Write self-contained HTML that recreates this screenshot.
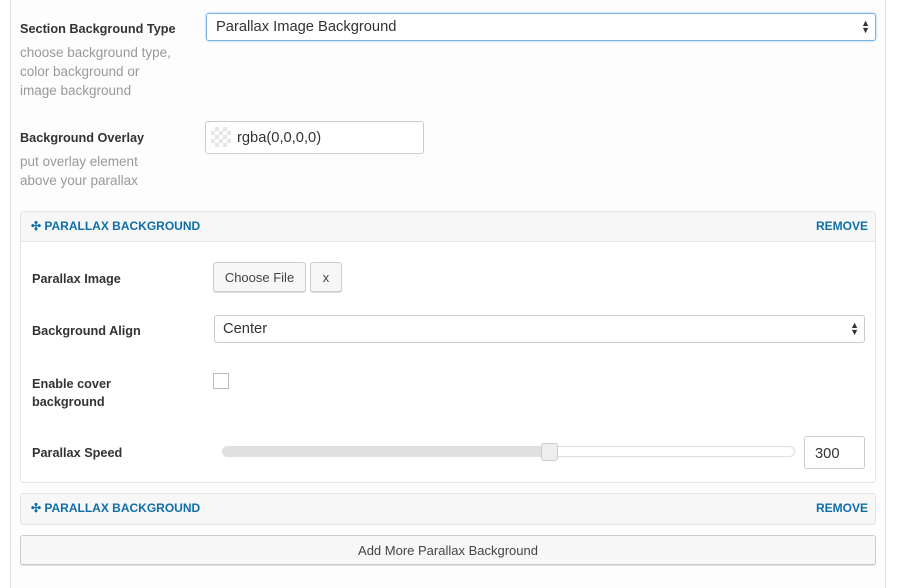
<!DOCTYPE html>
<html><head><style>
*{box-sizing:border-box;margin:0;padding:0}
body{width:900px;height:579px;background:#fff;font-family:"Liberation Sans",sans-serif;position:relative;overflow:hidden;color:#333}
.a{position:absolute}
.outer{left:10px;top:-2px;width:876px;height:590px;border-left:1px solid #e5e5e5;border-right:1px solid #e5e5e5;background:#fdfdfd}
.lbl{font-size:12.7px;font-weight:bold;color:#333}
.desc{font-size:13.5px;color:#999;line-height:19px}
.inp{border:1px solid #ccc;border-radius:3px;background:#fff;font-size:14.7px;color:#333}
.blue{color:#0e6fa8;font-size:12px;font-weight:bold}
.btn{border:1px solid #ccc;border-radius:3px;background:#f7f7f7;font-size:13px;color:#444;text-align:center;box-shadow:0 1px 0 #ddd}
.arr{position:absolute;right:5px;font-size:9px;line-height:7px;color:#333}
</style></head><body>
<div class="a outer"></div>
<div class="a lbl" style="left:20px;top:22px">Section Background Type</div>
<div class="a desc" style="left:20px;top:43px">choose background type,<br>color background or<br>image background</div>
<div class="a inp" style="left:206px;top:13px;width:670px;height:28px;border-color:#7cb2e3;box-shadow:0 0 2px #9cc6ee;padding:5px 9px">Parallax Image Background<div class="arr" style="top:6px">▲<br>▼</div></div>
<div class="a lbl" style="left:20px;top:131px">Background Overlay</div>
<div class="a desc" style="left:20px;top:152px">put overlay element<br>above your parallax</div>
<div class="a inp" style="left:205px;top:121px;width:219px;height:33px;padding:8px 0 0 31px">rgba(0,0,0,0)
<div class="a" style="left:5px;top:5px;width:20px;height:20px;background:repeating-conic-gradient(#e6e6e6 0 25%,#fff 0 50%) 0 0/8px 8px"></div></div>

<div class="a" style="left:20px;top:211px;width:856px;height:272px;border:1px solid #e5e5e5;border-radius:3px;background:#fff"></div>
<div class="a" style="left:21px;top:212px;width:854px;height:30px;background:#f7f7f7;border-bottom:1px solid #e5e5e5"></div>
<div class="a blue" style="left:31px;top:219px">✣ PARALLAX BACKGROUND</div>
<div class="a blue" style="left:816px;top:219px">REMOVE</div>

<div class="a lbl" style="left:32px;top:272px">Parallax Image</div>
<div class="a btn" style="left:213px;top:262px;width:93px;height:30px;padding-top:7px">Choose File</div>
<div class="a btn" style="left:310px;top:262px;width:32px;height:30px;padding-top:7px">x</div>
<div class="a lbl" style="left:32px;top:324px">Background Align</div>
<div class="a inp" style="left:214px;top:315px;width:651px;height:28px;padding:5px 8px">Center<div class="arr" style="top:6px">▲<br>▼</div></div>
<div class="a lbl" style="left:32px;top:375px;line-height:18px">Enable cover<br>background</div>
<div class="a" style="left:213px;top:373px;width:16px;height:16px;border:1px solid #bbb;background:#fff"></div>
<div class="a lbl" style="left:32px;top:446px">Parallax Speed</div>
<div class="a" style="left:222px;top:446px;width:573px;height:11px;border:1px solid #ddd;border-radius:6px;background:#fff"></div>
<div class="a" style="left:222px;top:446px;width:330px;height:11px;border-radius:6px 0 0 6px;background:#e0e0e0"></div>
<div class="a" style="left:541px;top:443px;width:17px;height:18px;border:1px solid #ccc;border-radius:3px;background:#eee"></div>
<div class="a inp" style="left:804px;top:436px;width:61px;height:33px;padding:9px 10px">300</div>

<div class="a" style="left:20px;top:493px;width:856px;height:32px;border:1px solid #e5e5e5;border-radius:3px;background:#f7f7f7"></div>
<div class="a blue" style="left:31px;top:501px">✣ PARALLAX BACKGROUND</div>
<div class="a blue" style="left:816px;top:501px">REMOVE</div>
<div class="a btn" style="left:20px;top:535px;width:856px;height:30px;padding-top:7px">Add More Parallax Background</div>
</body></html>
